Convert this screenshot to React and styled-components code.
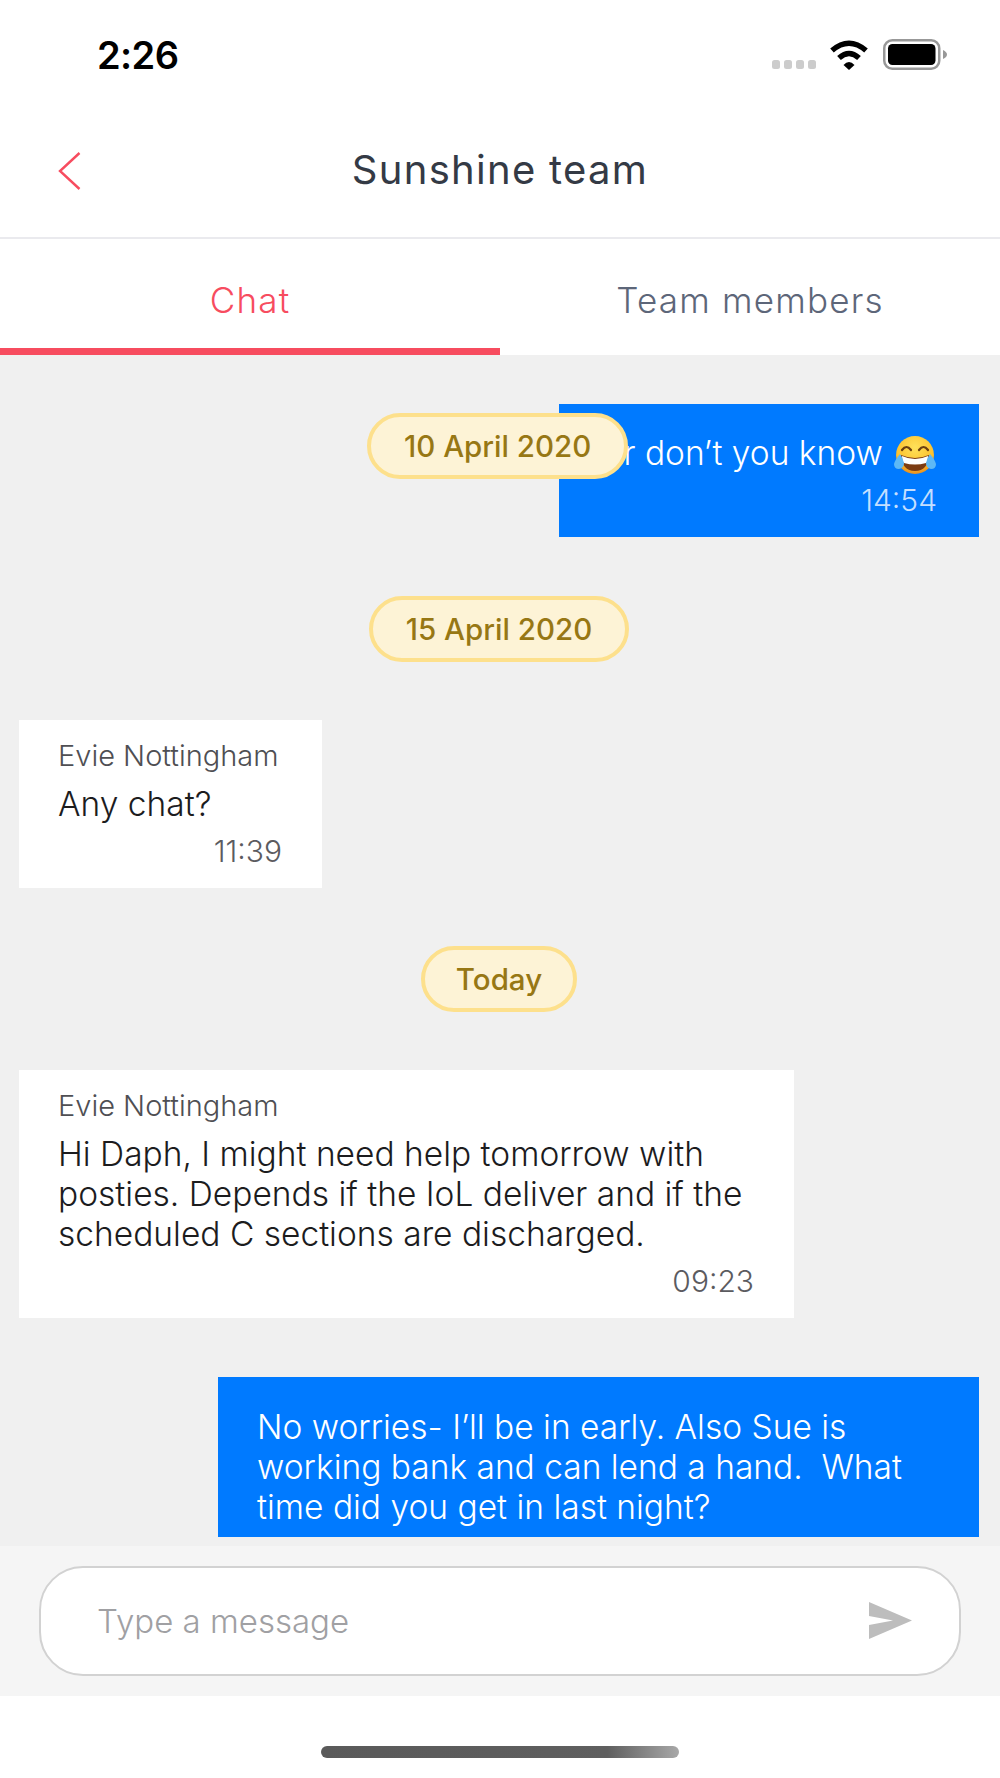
import React from "react";
import styled, { createGlobalStyle } from "styled-components";

const Global = createGlobalStyle`
  html, body { margin: 0; padding: 0; background: #fff; }
  * { box-sizing: border-box; }
  #root { width: 1000px; height: 1778px; }
`;

const Phone = styled.div`
  width: 1000px;
  height: 1778px;
  display: flex;
  flex-direction: column;
  background: #fff;
  font-family: Inter, "Liberation Sans", sans-serif;
  overflow: hidden;
`;

const StatusBar = styled.div`
  height: 100px;
  flex: none;
  display: flex;
  justify-content: space-between;
  align-items: flex-start;
  padding: 33px 52px 0 97px;
`;
const Clock = styled.div`
  font-size: 38px;
  line-height: 44px;
  font-weight: 600;
  color: #000;
  letter-spacing: -0.6px;
`;
const StatusIcons = styled.div`
  display: flex;
  align-items: flex-end;
  padding-top: 6px;
`;
const SignalDots = styled.div`
  display: flex;
  gap: 4px;
  margin: 0 14px 1px 0;
`;
const Dot = styled.span`
  width: 8px;
  height: 9px;
  border-radius: 2.5px;
  background: #ccc;
`;
const WifiIcon = styled.svg`
  display: block;
`;
const BatteryIcon = styled.svg`
  margin-left: 15px;
  display: block;
`;

const NavBar = styled.div`
  height: 139px;
  flex: none;
  position: relative;
  display: flex;
  align-items: center;
  justify-content: center;
  padding-top: 3px;
  border-bottom: 2px solid #eaeaee;
`;
const BackIcon = styled.svg`
  position: absolute;
  left: 58px;
  top: 52px;
`;
const Title = styled.div`
  font-size: 40px;
  line-height: 48px;
  font-weight: 400;
  letter-spacing: 1.3px;
  color: #343a45;
`;

const Tabs = styled.div`
  height: 116px;
  flex: none;
  display: flex;
`;
const Tab = styled.div`
  flex: 1;
  display: flex;
  align-items: center;
  justify-content: center;
  padding-top: 13px;
  font-size: 35px;
  font-weight: 300;
  letter-spacing: 1.2px;
  color: ${(p) => (p.$active ? "#f74c5f" : "#5d6679")};
  border-bottom: 7px solid ${(p) => (p.$active ? "#f74c5f" : "transparent")};
`;

const ChatPanel = styled.div`
  flex: 1;
  min-height: 0;
  background: #f0f0f0;
  padding-bottom: 9px;
  display: flex;
`;
const ChatScroll = styled.div`
  flex: 1;
  position: relative;
  overflow: hidden;
  display: flex;
  flex-direction: column;
  align-items: stretch;
  padding: 49px 21px 0 19px;
`;
const StickyPill = styled.div`
  position: absolute;
  left: 367px;
  top: 58px;
`;
const PillRow = styled.div`
  display: flex;
  justify-content: center;
  margin: ${(p) => p.$margin};
`;
const Pill = styled.div`
  height: 66px;
  padding: 0 ${(p) => p.$pad || 33}px;
  display: flex;
  align-items: center;
  border-radius: 33px;
  background: #fdf3d6;
  border: 4px solid #fde08c;
  color: #977714;
  font-size: 29.5px;
  font-weight: 500;
  white-space: nowrap;
`;
const Bubble = styled.div`
  flex: none;
  align-self: ${(p) => (p.$mine ? "flex-end" : "flex-start")};
  width: ${(p) => p.$width}px;
  margin-top: ${(p) => p.$top || 0}px;
  background: ${(p) => (p.$mine ? "#007aff" : "#fff")};
  color: ${(p) => (p.$mine ? "#fff" : "#1c1c1e")};
  padding: ${(p) => p.$pad || "18px 40px 19px 39px"};
`;
const Sender = styled.div`
  font-size: 29px;
  font-weight: 300;
  line-height: 36px;
  margin-bottom: 10px;
  color: #4f4f53;
  white-space: nowrap;
`;
const Body = styled.div`
  font-size: 33.5px;
  line-height: 40px;
  display: flex;
  align-items: center;
  white-space: pre;
  font-weight: 300;
`;
const Time = styled.div`
  font-size: 30px;
  line-height: 36px;
  margin-top: 9px;
  font-weight: 300;
  text-align: right;
  color: ${(p) => (p.$mine ? "#c4dfff" : "#5b5b5f")};
`;
const EmojiIcon = styled.svg`
  margin: 0 1px -4px auto;
  flex: none;
`;

const InputBar = styled.div`
  height: 150px;
  flex: none;
  background: #f5f5f5;
  padding: 20px 39px;
`;
const InputBox = styled.div`
  height: 110px;
  border-radius: 44px;
  background: #fff;
  border: 2px solid #d2d2d2;
  display: flex;
  align-items: center;
  justify-content: space-between;
  padding: 0 47px 2px 56px;
`;
const Placeholder = styled.div`
  font-size: 33px;
  font-weight: 300;
  color: #a0a0a3;
  margin-top: 2px;
`;
const HomeArea = styled.div`
  height: 82px;
  flex: none;
  display: flex;
  justify-content: center;
  padding-top: 50px;
`;
const HomeBar = styled.div`
  width: 358px;
  height: 12px;
  border-radius: 6px;
  background: linear-gradient(90deg, #5a5a5a 0%, #5f5f5f 80%, #a8a8a8 100%);
`;

const Emoji = () => (
  <EmojiIcon width="42" height="40" viewBox="0 0 42 40">
    <defs>
      <radialGradient id="face" cx="50%" cy="30%" r="70%">
        <stop offset="0%" stopColor="#ffe15a" />
        <stop offset="70%" stopColor="#fcc22e" />
        <stop offset="100%" stopColor="#ea8f1e" />
      </radialGradient>
    </defs>
    <circle cx="21" cy="20" r="19" fill="url(#face)" />
    <path d="M8 15 Q12.5 9 17 15" fill="none" stroke="#6b3f10" strokeWidth="2.2" strokeLinecap="round" />
    <path d="M25 15 Q29.5 9 34 15" fill="none" stroke="#6b3f10" strokeWidth="2.2" strokeLinecap="round" />
    <path d="M7 20 Q21 26 35 20 Q34 36 21 36 Q8 36 7 20 Z" fill="#7b3b12" />
    <path d="M8 21 Q21 27 34 21 Q34 27 32 28 Q21 31 10 28 Q8 27 8 21 Z" fill="#fff" />
    <path d="M6 19 Q1 25 0 29 Q0 34 5 34 Q10 33 10 28 Q9 23 6 19 Z" fill="#5db8f5" />
    <path d="M36 19 Q41 25 42 29 Q42 34 37 34 Q32 33 32 28 Q33 23 36 19 Z" fill="#5db8f5" />
  </EmojiIcon>
);

export default function App() {
  return (
    <Phone>
      <Global />
      <StatusBar>
        <Clock>2:26</Clock>
        <StatusIcons>
          <SignalDots>
            <Dot /><Dot /><Dot /><Dot />
          </SignalDots>
          <WifiIcon width="38" height="30" viewBox="0 0 38 30">
            <path d="M2 10.5 Q19 -4 36 10.5" fill="none" stroke="#000" strokeWidth="5.5" />
            <path d="M9 18 Q19 9 29 18" fill="none" stroke="#000" strokeWidth="5.5" />
            <path d="M13.5 25 Q19 19 24.5 25 L19 30 Z" fill="#000" />
          </WifiIcon>
          <BatteryIcon width="65" height="31" viewBox="0 0 65 31">
            <rect x="1.25" y="1.25" width="55" height="28.5" rx="8" fill="none" stroke="#989898" strokeWidth="2.5" />
            <rect x="5" y="5" width="47.5" height="21" rx="4.5" fill="#000" />
            <path d="M60 11 Q64 13 64 15.5 Q64 18 60 20 Z" fill="#989898" />
          </BatteryIcon>
        </StatusIcons>
      </StatusBar>

      <NavBar>
        <BackIcon width="24" height="38" viewBox="0 0 24 38">
          <path d="M21.5 1 L2 19 L21.5 37" fill="none" stroke="#f74c5f" strokeWidth="2.4" />
        </BackIcon>
        <Title>Sunshine team</Title>
      </NavBar>

      <Tabs>
        <Tab $active>Chat</Tab>
        <Tab>Team members</Tab>
      </Tabs>

      <ChatPanel>
        <ChatScroll>
          <Bubble $mine $width={420} $pad="29px 42px 19px 39px">
            <Body>
              Or don’t you know
              <Emoji />
            </Body>
            <Time $mine>14:54</Time>
          </Bubble>
          <PillRow $margin="59px 0 58px 0">
            <Pill>15 April 2020</Pill>
          </PillRow>
          <Bubble $width={303}>
            <Sender>Evie Nottingham</Sender>
            <Body>Any chat?</Body>
            <Time>11:39</Time>
          </Bubble>
          <PillRow $margin="58px 0 58px 0">
            <Pill $pad={31}>Today</Pill>
          </PillRow>
          <Bubble $width={775}>
            <Sender>Evie Nottingham</Sender>
            <Body>Hi Daph, I might need help tomorrow with</Body>
            <Body>posties. Depends if the IoL deliver and if the</Body>
            <Body>scheduled C sections are discharged.</Body>
            <Time>09:23</Time>
          </Bubble>
          <Bubble $mine $width={761} $top={59} $pad="30px 40px 10px 39px">
            <Body>No worries- I’ll be in early. Also Sue is</Body>
            <Body>working bank and can lend a hand.  What</Body>
            <Body>time did you get in last night?</Body>
          </Bubble>
          <StickyPill>
            <Pill>10 April 2020</Pill>
          </StickyPill>
        </ChatScroll>
      </ChatPanel>

      <InputBar>
        <InputBox>
          <Placeholder>Type a message</Placeholder>
          <svg width="43" height="37" viewBox="0 0 43 37">
            <path d="M0 0 L43 18.5 L0 37 L0 23 L24 18.5 L0 14 Z" fill="#bdbdbd" />
          </svg>
        </InputBox>
      </InputBar>
      <HomeArea>
        <HomeBar />
      </HomeArea>
    </Phone>
  );
}
